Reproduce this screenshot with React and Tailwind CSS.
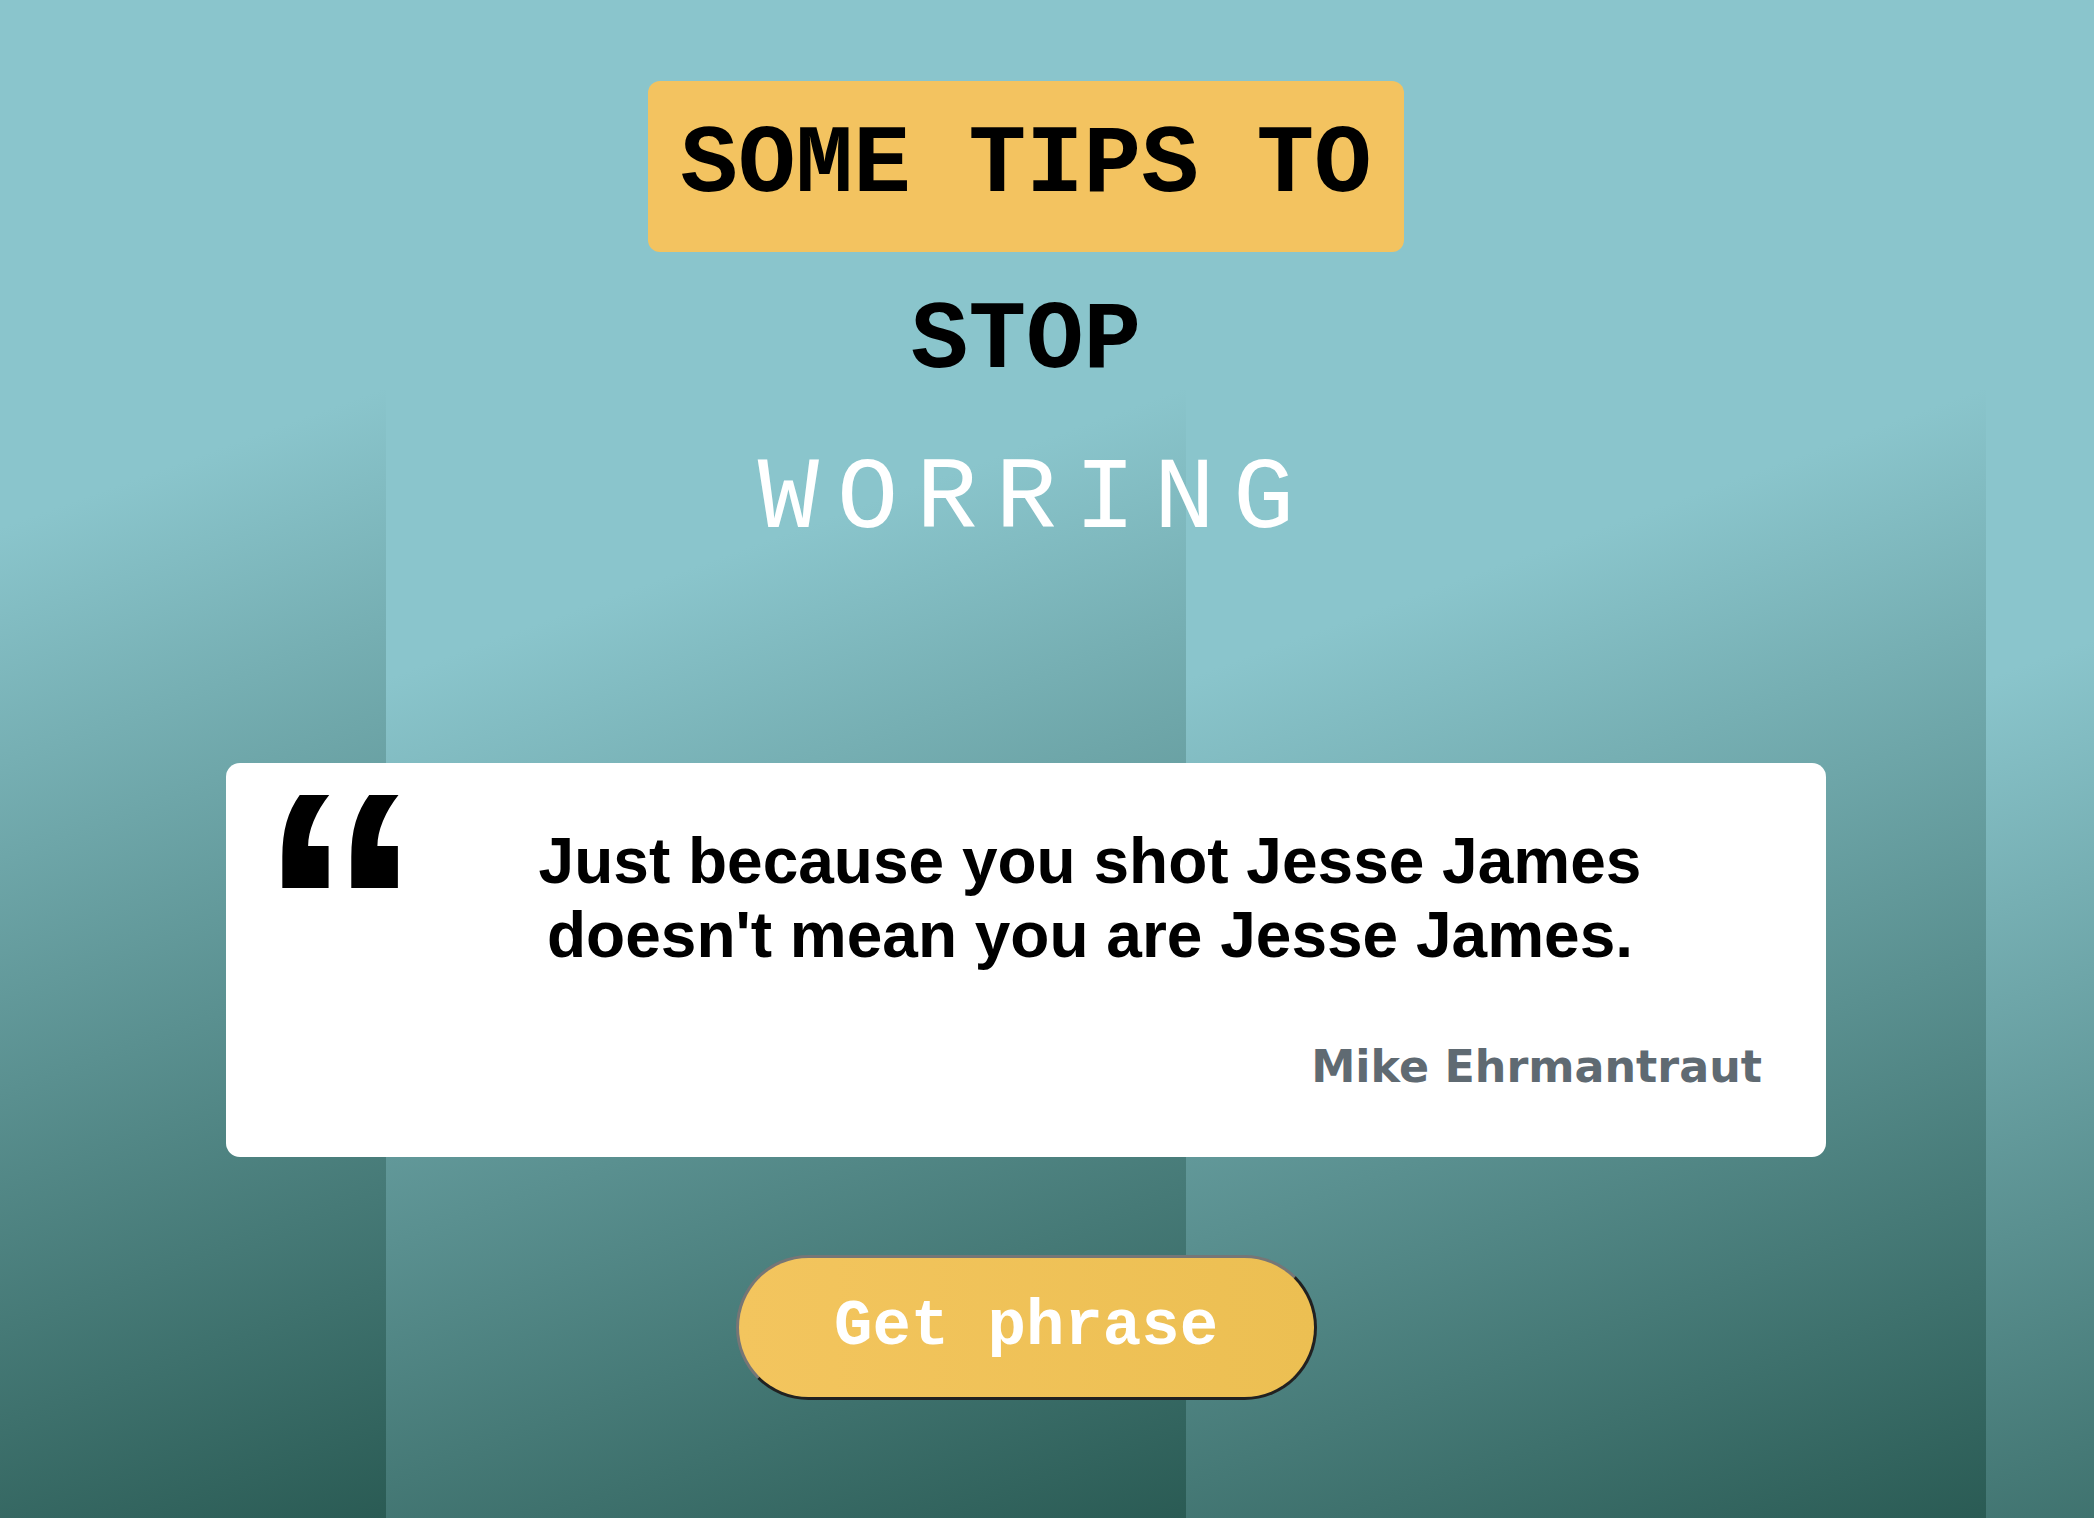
import React from "react";

export default function App() {
  return (
    <div className="min-h-screen w-full bg-[#8ac5cc] [background-image:linear-gradient(160deg,#8ac5cc_37.5%,#2a5b54)] [background-size:800px_100%] [background-position:386px_0] bg-repeat-x">
      <div className="ml-[226px] w-[1600px] flex flex-col items-center pt-[81px]">
        <h1 className="bg-[#f3c360] rounded-[12px] px-[32px] py-[31px] font-['Courier_New','Liberation_Mono',monospace] font-bold text-[96px] leading-[1.1333] text-black">
          SOME TIPS TO
        </h1>
        <h2 className="mt-[36px] font-['Courier_New','Liberation_Mono',monospace] font-bold text-[96px] leading-[1.1333] text-black">
          STOP
        </h2>
        <h3 className="mt-[46px] font-['Courier_New','Liberation_Mono',monospace] font-normal text-[102px] leading-[1.1333] tracking-[18px] pl-[18px] text-white">
          WORRING
        </h3>

        <div className="mt-[205px] w-[1600px] h-[394px] bg-white rounded-[14px] px-[64px] pt-[30px] flex flex-col">
          <div className="flex">
            <div className="w-[126px] shrink-0 -ml-[32px] h-[120px] font-['Liberation_Sans',Arial,sans-serif] font-bold text-[330px] leading-[0.6] text-black">
              <span className="block mt-[16px]">“</span>
            </div>
            <p className="flex-1 ml-[34px] mt-[32px] text-center font-['Liberation_Sans',Arial,sans-serif] font-bold text-[64px] leading-[1.149] text-black">
              Just because you shot Jesse James
              <br />
              doesn't mean you are Jesse James.
            </p>
          </div>
          <p className="mt-[69px] text-right font-['DejaVu_Sans',Verdana,sans-serif] font-bold text-[44.4px] leading-[1.19] text-[#5f6a72]">
            Mike Ehrmantraut
          </p>
        </div>

        <button className="mt-[98px] w-[581px] h-[145px] rounded-[73px] border-[3px] [border-style:outset] border-[#767676] bg-[linear-gradient(90deg,#f3c55e,#ecbf52)] font-['Courier_New','Liberation_Mono',monospace] font-bold text-[64px] leading-[1.1333] text-white">
          Get phrase
        </button>
      </div>
    </div>
  );
}
